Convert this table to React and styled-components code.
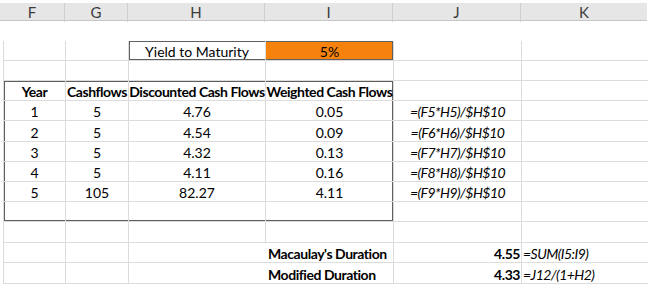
import styled, { createGlobalStyle } from 'styled-components'

const GlobalStyle = createGlobalStyle`
  body {
    margin: 0;
    background: #ffffff;
    font-family: Lato, 'Liberation Sans', sans-serif;
  }
`

const widths = [62, 63, 137, 128, 128, 126]
const grid = widths.map(w => `${w}px`).join(' ')

const rows = [
  ['1', '5', '4.76', '0.05', '=(F5*H5)/$H$10'],
  ['2', '5', '4.54', '0.09', '=(F6*H6)/$H$10'],
  ['3', '5', '4.32', '0.13', '=(F7*H7)/$H$10'],
  ['4', '5', '4.11', '0.16', '=(F8*H8)/$H$10'],
  ['5', '105', '82.27', '4.11', '=(F9*H9)/$H$10'],
]

const App = () => (
  <Sheet>
    <GlobalStyle />
    <Header>
      {['F', 'G', 'H', 'I', 'J', 'K'].map((c, i) => (
        <HeaderCell key={c} $last={i === 5}>
          {c}
        </HeaderCell>
      ))}
    </Header>
    <BlankRow />

    <Row $h={20}>
      <Cell />
      <Cell />
      <Cell $boxT $boxB $boxL $center>Yield to Maturity</Cell>
      <Cell $boxT $boxB $boxR $center $fill="#f5820d">5%</Cell>
      <Cell />
      <Cell $noRight />
    </Row>

    <Row $h={20}>
      <Cell /><Cell /><Cell /><Cell /><Cell /><Cell $noRight />
    </Row>

    <Row $h={20}>
      <Cell $boxT $boxL $center $bold>Year</Cell>
      <Cell $boxT $center $bold>Cashflows</Cell>
      <Cell $boxT $center $bold>Discounted Cash Flows</Cell>
      <Cell $boxT $boxR $center $bold>Weighted Cash Flows</Cell>
      <Cell />
      <Cell $noRight />
    </Row>

    {rows.map((r, i) => (
      <Row key={r[0]} $h={i === 1 ? 21 : 20}>
        <Cell $boxL $center>{r[0]}</Cell>
        <Cell $center>{r[1]}</Cell>
        <Cell $center>{r[2]}</Cell>
        <Cell $boxR $center>{r[3]}</Cell>
        <Cell $center $italic>{r[4]}</Cell>
        <Cell $noRight />
      </Row>
    ))}

    <Row $h={20}>
      <Cell $boxL $boxB /><Cell $boxB /><Cell $boxB /><Cell $boxB $boxR />
      <Cell /><Cell $noRight />
    </Row>

    <Row $h={21}>
      <Cell /><Cell /><Cell /><Cell /><Cell /><Cell $noRight />
    </Row>

    <Row $h={20}>
      <Cell /><Cell />
      <Cell $noRight />
      <Cell $bold>Macaulay&apos;s Duration</Cell>
      <Cell $bold $right>4.55</Cell>
      <Cell $italic $noRight $tight>=SUM(I5:I9)</Cell>
    </Row>

    <Row $h={21}>
      <Cell /><Cell />
      <Cell $noRight />
      <Cell $bold>Modified Duration</Cell>
      <Cell $bold $right>4.33</Cell>
      <Cell $italic $noRight $tight>=J12/(1+H2)</Cell>
    </Row>
  </Sheet>
)

export default App

const Sheet = styled.div`
  width: 653px;
  height: 299px;
  padding-top: 3px;
  box-sizing: border-box;
  background: #ffffff;
  overflow: hidden;
`

const Header = styled.div`
  display: grid;
  grid-template-columns: 65px ${widths.slice(1).map(w => `${w}px`).join(' ')};
  height: 18px;
  width: 647px;
  background: #e6e6e6;
  border-bottom: 1px solid #c6c6c6;
  box-sizing: border-box;
`

const HeaderCell = styled.div`
  display: flex;
  align-items: center;
  justify-content: center;
  font-size: 15px;
  color: #3c3c3c;
  border-right: ${p => (p.$last ? 'none' : '1px solid #cfcfcf')};
  box-sizing: border-box;
  padding-bottom: 1px;
`

const BlankRow = styled.div`
  height: 20px;
`

const Row = styled.div`
  display: grid;
  grid-template-columns: ${grid};
  height: ${p => p.$h}px;
  margin-left: 3px;
  border-left: 1px solid #dcdcdc;
  width: 644px;
  box-sizing: border-box;
`

const edge = '#5f5f5f'

const Cell = styled.div`
  display: flex;
  align-items: flex-end;
  justify-content: ${p => (p.$center ? 'center' : p.$right ? 'flex-end' : 'flex-start')};
  padding: 0 ${p => (p.$right ? 1 : 2)}px 1px ${p => (p.$tight ? 1 : 2)}px;
  box-sizing: border-box;
  border-right: ${p => (p.$noRight ? 'none' : '1px solid #dcdcdc')};
  border-bottom: 1px solid #dcdcdc;
  background: ${p => p.$fill || 'transparent'};
  font-size: 14px;
  line-height: 14px;
  color: #000000;
  font-weight: ${p => (p.$bold ? 700 : 400)};
  font-style: ${p => (p.$italic ? 'italic' : 'normal')};
  letter-spacing: ${p => (p.$bold ? '-0.45px' : p.$italic ? '-0.55px' : '0')};
  white-space: nowrap;
  box-shadow: ${p =>
    [
      p.$boxT && `inset 0 1px 0 ${edge}`,
      p.$boxB && `inset 0 -1px 0 ${edge}`,
      p.$boxL && `inset 1px 0 0 ${edge}`,
      p.$boxR && `inset -1px 0 0 ${edge}`,
    ]
      .filter(Boolean)
      .join(', ') || 'none'};
`
